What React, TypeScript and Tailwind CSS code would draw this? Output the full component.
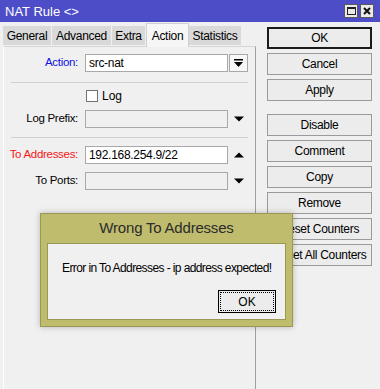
import React from "react";

const font = { fontFamily: '"Liberation Sans", Arial, sans-serif' };

function DownBarIcon() {
  return (
    <svg width="9" height="8" viewBox="0 0 9 8">
      <rect x="0" y="0" width="9" height="1.5" fill="#000" />
      <path d="M0 3 L9 3 L4.5 8 Z" fill="#000" />
    </svg>
  );
}

function Tri({ up }: { up?: boolean }) {
  return (
    <svg width="10" height="6" viewBox="0 0 10 6">
      {up ? <path d="M0 5.5 L10 5.5 L5 0.5 Z" fill="#000" /> : <path d="M0 0.5 L10 0.5 L5 5.5 Z" fill="#000" />}
    </svg>
  );
}

function Btn({ label, primary }: { label: string; primary?: boolean }) {
  return (
    <div
      className={
        "h-[22px] w-[105px] flex items-center justify-center text-[12px] text-black bg-[#ececec] whitespace-nowrap " +
        (primary ? "border-2 border-[#1b1b1b]" : "border border-[#9a9a9a]")
      }
    >
      {label}
    </div>
  );
}

function Row({
  label,
  labelClass,
  children,
}: {
  label: string;
  labelClass?: string;
  children: React.ReactNode;
}) {
  return (
    <div className="flex items-center h-[18px]">
      <div className={"w-[75px] text-right text-[11.5px] pr-[1px] whitespace-nowrap tracking-[-0.3px] " + (labelClass ?? "text-black")}>
        {label}
      </div>
      <div className="w-[6px]" />
      {children}
    </div>
  );
}

export default function App() {
  const tabs: [string, string][] = [
    ["General", "w-[49px]"],
    ["Advanced", "w-[60px]"],
    ["Extra", "w-[34px]"],
    ["Action", "w-[43px]"],
    ["Statistics", "w-[53px]"],
  ];
  return (
    <div className="w-[380px] h-[389px] bg-[#f0f0f0] relative overflow-hidden flex flex-col" style={font}>
      {/* title bar */}
      <div className="h-[22px] bg-[#4d4dc8] flex items-center justify-between pl-[5px] pr-[6px] shrink-0">
        <span className="text-white text-[13px] leading-none">NAT Rule &lt;&gt;</span>
        <div className="flex gap-[2px] items-center">
          <div className="w-[14px] h-[14px] bg-[#e9e9e9] border border-[#5a5a5a] flex items-center justify-center">
            <div className="w-[9px] h-[8px] border border-[#222] border-t-2" />
          </div>
          <div className="w-[14px] h-[14px] bg-[#e9e9e9] border border-[#5a5a5a] flex items-center justify-center">
            <svg width="8" height="8" viewBox="0 0 8 8">
              <path d="M1 1 L7 7 M7 1 L1 7" stroke="#111" strokeWidth="2" />
            </svg>
          </div>
        </div>
      </div>

      <div className="flex flex-1">
        {/* left side: tabs + panel */}
        <div className="w-[256px] pl-[3px] flex flex-col">
          <div className="h-[24px] flex items-end">
            {tabs.map(([t, w]) => {
              const active = t === "Action";
              return (
                <div
                  key={t}
                  className={
                    w +
                    " text-[12px] tracking-[-0.3px] text-black flex items-center justify-center whitespace-nowrap " +
                    (active
                      ? "h-[24px] bg-[#f6f6f6] border border-b-0 border-[#d0d0d0] -mb-[1px] relative z-10"
                      : "h-[19px] bg-[#d9d9d9] border-r border-[#f0f0f0] mb-[1px]")
                  }
                >
                  {t}
                </div>
              );
            })}
          </div>
          <div className="flex-1 border-l border-l-white border-t border-t-[#d6d6d6] border-r border-r-[#a0a0a0] flex flex-col pt-[7px]">
            <Row label="Action:" labelClass="text-[#1010e0]">
              <div className="w-[143px] h-[18px] bg-white border border-[#a8a8a8] text-[12px] tracking-[-0.3px] pl-[3px] flex items-center">
                src-nat
              </div>
              <div className="ml-[1px] w-[19px] h-[18px] border border-[#a8a8a8] bg-[#f7f7f7] flex items-center justify-center">
                <DownBarIcon />
              </div>
            </Row>
            <div className="ml-[7px] w-[237px] h-px bg-[#d0d0d0] mt-[10px] mb-[7px]" />
            <div className="flex items-center h-[12px] pl-[82px]">
              <div className="w-[12px] h-[12px] bg-white border border-[#707070]" />
              <span className="ml-[4px] text-[12px]">Log</span>
            </div>
            <div className="h-[8px]" />
            <Row label="Log Prefix:">
              <div className="w-[143px] h-[18px] bg-[#f0f0f0] border border-[#a8a8a8]" />
              <div className="w-[19px] flex justify-center pl-[2px]">
                <Tri />
              </div>
            </Row>
            <div className="ml-[7px] w-[237px] h-px bg-[#d0d0d0] mt-[9px] mb-[8px]" />
            <Row label="To Addresses:" labelClass="text-[#f01818]">
              <div className="w-[143px] h-[18px] bg-white border border-[#a8a8a8] text-[12px] tracking-[-0.3px] pl-[3px] flex items-center">
                192.168.254.9/22
              </div>
              <div className="w-[19px] flex justify-center pl-[2px]">
                <Tri up />
              </div>
            </Row>
            <div className="h-[8px]" />
            <Row label="To Ports:">
              <div className="w-[143px] h-[18px] bg-[#f0f0f0] border border-[#a8a8a8]" />
              <div className="w-[19px] flex justify-center pl-[2px]">
                <Tri />
              </div>
            </Row>
          </div>
        </div>

        {/* right side: buttons */}
        <div className="pl-[11px] pt-[5px] flex flex-col gap-[4px] tracking-[-0.3px]">
          <Btn label="OK" primary />
          <Btn label="Cancel" />
          <Btn label="Apply" />
          <div className="h-[5px]" />
          <Btn label="Disable" />
          <Btn label="Comment" />
          <Btn label="Copy" />
          <Btn label="Remove" />
          <Btn label="Reset Counters" />
          <Btn label="Reset All Counters" />
        </div>
      </div>

      {/* error dialog */}
      <div className="absolute left-[40px] top-[213px] w-[253px] h-[114px] bg-[#bfbc6e] border border-[#9a9852] shadow-[0_0_6px_rgba(0,0,0,0.25)] flex flex-col px-[6px] pb-[6px]">
        <div className="h-[29px] flex items-center justify-center text-[15px] text-[#2b2b2b] tracking-[-0.2px]">
          Wrong To Addresses
        </div>
        <div className="flex-1 bg-[#f0f0f0] border border-[#9a9852] flex flex-col">
          <div className="text-[12px] text-black pl-[14px] pt-[15px] whitespace-nowrap tracking-[-0.6px]">
            Error in To Addresses - ip address expected!
          </div>
          <div className="flex justify-end pr-[9px] mt-[13px]">
            <div className="w-[58px] h-[23px] border border-black bg-[#ececec] p-[1px]">
              <div className="w-full h-full border border-dotted border-black flex items-center justify-center text-[12px]">
                OK
              </div>
            </div>
          </div>
        </div>
      </div>
    </div>
  );
}
